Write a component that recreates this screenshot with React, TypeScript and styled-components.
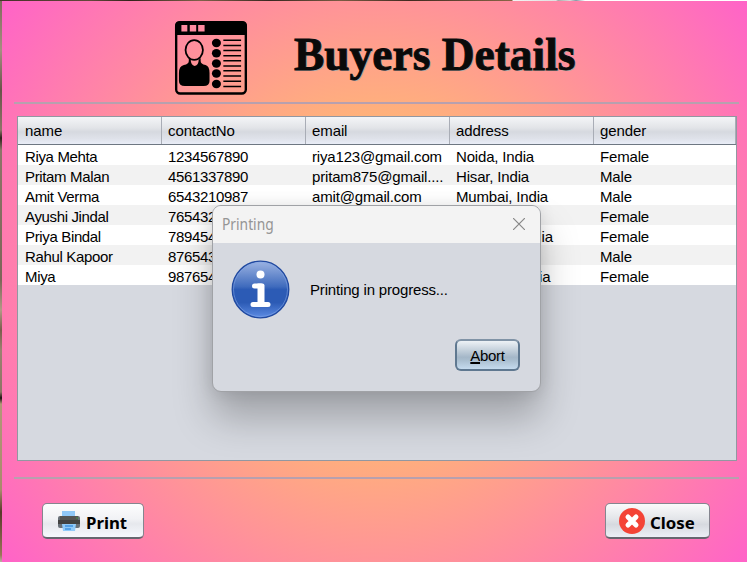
import React from "react";
import styled, { createGlobalStyle } from "styled-components";

const GlobalStyle = createGlobalStyle`
  * { box-sizing: border-box; }
  body { margin: 0; overflow: hidden; }
`;

const Desktop = styled.div`
  width: 747px;
  height: 562px;
  padding: 1px 0 0 2px;
  overflow: hidden;
  background:
    linear-gradient(90deg, #48302a 0, #63483b 90px, #33221b 130px, #81614a 200px, #3a2720 270px, #7b5b43 340px, #41291f 410px, #8a6546 512px, #f4f4f4 513px, #e0e0e0 556px, #a9a9a9 558px, #dcdcdc 570px, #8798a5 576px, #fff 585px) 0 0 / 100% 1px no-repeat,
    linear-gradient(180deg, #806a5c 0, #a58e80 50px, #69544a 90px, #8d7568 130px, #2f211c 138px, #8d7568 150px, #7c6658 280px, #b39a86 310px, #7a5d4d 330px, #9b8270 350px, #8d7565 392px, #1c1210 398px, #b29878 404px, #a98a6c 490px, #59392b 512px, #9a7658 555px, #bcb0a6 562px);
`;

const Window = styled.main`
  position: relative;
  width: 745px;
  height: 561px;
  padding: 0 10px 0 12px;
  display: flex;
  flex-direction: column;
  background: radial-gradient(circle 466px at 373px 280px, #ffdc50 0%, #ff63c8 100%);
  font-family: "Liberation Sans", Arial, sans-serif;
  font-size: 15px;
  color: #000;
`;

const Header = styled.header`
  height: 101px;
  display: flex;
  align-items: flex-start;
  padding: 19px 0 0 160px;
`;

const Title = styled.h1`
  margin: 8px 0 0 46px;
  font: bold 46px/54px "Liberation Serif", serif;
  color: #0a0a0a;
  white-space: nowrap;
  -webkit-text-stroke: 0.9px #0a0a0a;
  text-shadow: 1px 1px 0 #b3a8a6;
  transform: scaleX(0.988);
  transform-origin: left;
`;

const Divider = styled.div`
  height: 2px;
  width: 725px;
  flex: none;
  background: #b8a0ae;
`;

const TablePane = styled.section`
  width: 720px;
  height: 345px;
  margin: 12px 0 16px 3px;
  flex: none;
  border: 1px solid #9297a1;
  background: #d6d9e0;
`;

const Row = styled.div<{ $odd?: boolean }>`
  height: 20px;
  display: grid;
  grid-template-columns: 143px 144px 144px 144px 143px;
  align-items: center;
  background: ${(p) => (p.$odd ? "#f2f2f2" : "#fff")};
`;

const HeadRow = styled(Row)`
  height: 28px;
  grid-template-columns: 144px 144px 144px 144px 142px;
  align-items: stretch;
  border-bottom: 1px solid #6e7782;
  background: linear-gradient(#f4f5f7 0, #e2e4e8 40%, #d6d9df 55%, #dfe2ea 80%, #e9edf7 100%);
`;

const Cell = styled.span<{ $numeric?: boolean }>`
  padding: 2px 0 0 7px;
  line-height: 20px;
  letter-spacing: ${(p) => (p.$numeric ? "-0.34px" : "-0.17px")};
  white-space: nowrap;

  &:first-child { letter-spacing: -0.35px; }
`;

const HeadCell = styled.span`
  padding-left: 6px;
  line-height: 27px;
  letter-spacing: -0.1px;
  border-right: 1px solid #a9adb6;

  &:first-child { padding-left: 7px; }
`;

const Footer = styled.footer`
  display: flex;
  justify-content: space-between;
  padding: 24px 26px 0 28px;
`;

const ToolButton = styled.button<{ $wide?: boolean }>`
  width: ${(p) => (p.$wide ? "105px" : "102px")};
  height: 36px;
  padding: 0 0 0 ${(p) => (p.$wide ? "12px" : "14px")};
  display: flex;
  align-items: center;
  gap: ${(p) => (p.$wide ? "4px" : "5px")};
  margin-right: ${(p) => (p.$wide ? "1px" : "0")};
  border: 1px solid #85858f;
  border-bottom: 2px solid #66666f;
  border-radius: 5px;
  background: ${(p) =>
    p.$wide
      ? "linear-gradient(#fafafb 0, #e3e5e9 45%, #d6d9df 62%, #eceff6 100%)"
      : "linear-gradient(#fdfdfe 0, #f1f2f5 45%, #e6e8ed 60%, #f6f8fd 100%)"};
  font: bold 16.8px/22px "Noto Sans", sans-serif;
  color: #000;
  span { padding-top: 4px; }
`;

const Dialog = styled.div`
  position: absolute;
  left: 210px;
  top: 204px;
  width: 329px;
  height: 187px;
  border: 1px solid #a0a2a6;
  border-radius: 9px;
  overflow: hidden;
  background: #d6d9e0;
  box-shadow: 0 26px 38px rgba(0, 0, 0, 0.25), 0 1px 16px rgba(0, 0, 0, 0.1);
`;

const TitleBar = styled.div`
  height: 37px;
  display: flex;
  align-items: center;
  justify-content: space-between;
  padding: 0 15px 2px 9px;
  background: #f3f3f3;
  font: 15.5px/34px "Noto Sans", sans-serif;
  color: #959595;
`;

const TitleText = styled.span`
  display: block;
  transform: scaleX(0.89);
  transform-origin: left;
`;

const DialogBody = styled.div`
  display: flex;
  align-items: center;
  padding: 17px 0 0 18px;
  gap: 19px;
`;

const Message = styled.span`
  letter-spacing: -0.17px;
  padding-bottom: 2px;
`;

const DialogActions = styled.div`
  display: flex;
  justify-content: flex-end;
  padding: 19px 20px 0 0;
`;

const AbortButton = styled.button`
  width: 65px;
  height: 32px;
  padding: 0;
  border: 2px solid #5f7890;
  border-top-color: #8093a6;
  border-radius: 6px;
  background: linear-gradient(#edf2f6 0, #c5d1dc 32%, #a4b7c8 58%, #a8bccd 66%, #c5dbee 100%);
  font: 15px "Liberation Sans", Arial, sans-serif;
  letter-spacing: -0.3px;
  color: #000;
  u { text-decoration-thickness: 2px; text-underline-offset: 1px; }
`;

const columns = ["name", "contactNo", "email", "address", "gender"];
const buyers = [
  ["Riya Mehta", "1234567890", "riya123@gmail.com", "Noida, India", "Female"],
  ["Pritam Malan", "4561337890", "pritam875@gmail....", "Hisar, India", "Male"],
  ["Amit Verma", "6543210987", "amit@gmail.com", "Mumbai, India", "Male"],
  ["Ayushi Jindal", "7654321098", "", "", "Female"],
  ["Priya Bindal", "7894543210", "", "Gurgaon, India", "Female"],
  ["Rahul Kapoor", "8765432109", "", "", "Male"],
  ["Miya", "9876543210", "", "Chennai, India", "Female"],
];

const DetailsIcon = () => (
  <svg width="74" height="76" viewBox="0 0 75 76" preserveAspectRatio="none">
    <rect x="2.200" y="2.500" width="70.600" height="71" rx="4" fill="none" stroke="#000" strokeWidth="2.400" />
    <path d="M1 6Q1 1 6 1H69Q74 1 74 6V15H1Z" />
    <g fill="#ff8ba0">
      <rect x="7.500" y="5" width="6" height="6.500" />
      <rect x="16" y="5" width="6.500" height="6.500" />
      <rect x="24.500" y="5" width="6.500" height="6.500" />
    </g>
    <ellipse cx="20.500" cy="30" rx="8.800" ry="9.900" fill="none" stroke="#000" strokeWidth="1.800" />
    <path d="M15 38V41Q15 44 10 45Q5 46 5 53V61Q5 66 11 66H30Q36 66 36 61V53Q36 46 32 45Q27 44 27 41V38L25 40Q25 45 21 46Q17 45 17 40Z" />
    {[23, 33.2, 43.5, 53.5, 64].map((y) => (
      <g key={y}>
        <ellipse cx="43" cy={y} rx="4.600" ry="4.200" />
        <path d={`M50 ${y - 2.700}H68M50 ${y + 2.500}H68`} stroke="#000" strokeWidth="1.500" />
      </g>
    ))}
  </svg>
);

const PrinterIcon = () => (
  <svg width="24" height="22" viewBox="0 0 24 22">
    <path d="M5 1H18V7H5Z" fill="#90c8f8" />
    <rect x="1" y="6" width="22" height="12" rx="2" fill="#687078" />
    <path d="M3 6H21V10H3Z" fill="#555" />
    <path d="M1 10H23V14H1Z" fill="#424242" />
    <circle cx="20" cy="8" r=".8" fill="#43a047" />
    <path d="M5 14H19L18 21H6Z" fill="#90caf9" />
    <path d="M8 16H16M8 19H14" stroke="#1976d2" strokeWidth="1" />
  </svg>
);

const CloseIcon = () => (
  <svg width="28" height="28" viewBox="0 0 28 28">
    <circle cx="14" cy="14" r="13" fill="#f44336" />
    <path d="M10 10L18 18M18 10L10 18" stroke="#fff" strokeWidth="5" strokeLinecap="round" />
  </svg>
);

const InfoIcon = () => (
  <svg width="60" height="60" viewBox="0 0 60 60">
    <defs>
      <linearGradient id="infoFill" x2="0" y2="1">
        <stop offset="0" stopColor="#9db4e2" />
        <stop offset=".45" stopColor="#3f6bbd" />
        <stop offset=".5" stopColor="#2c5bb5" />
        <stop offset=".73" stopColor="#2c5bb5" />
        <stop offset="1" stopColor="#5d8ce4" />
      </linearGradient>
    </defs>
    <circle cx="29.500" cy="29.500" r="28.300" fill="url(#infoFill)" stroke="#2049a0" strokeWidth="1.300" />
    <circle cx="29.500" cy="29.500" r="27" fill="none" stroke="#83a6e6" strokeOpacity=".55" />
    <circle cx="29.500" cy="14.500" r="4" fill="#fff" />
    <path d="M23.500 26H30V44.500M22 44.500H37" fill="none" stroke="#fff" strokeWidth="5" strokeLinecap="round" strokeLinejoin="round" />
    <path d="M26.500 23.500H31.500Q33.500 23.500 33.500 25.500V45H26.500Z" fill="#fff" />
  </svg>
);

export default function App() {
  return (
    <Desktop>
      <GlobalStyle />
      <Window>
        <Header>
          <DetailsIcon />
          <Title>Buyers Details</Title>
        </Header>
        <Divider />
        <TablePane>
          <HeadRow>
            {columns.map((c) => <HeadCell key={c}>{c}</HeadCell>)}
          </HeadRow>
          {buyers.map((buyer, i) => (
            <Row key={buyer[0]} $odd={i % 2 === 1}>
              {buyer.map((value, j) => <Cell key={j} $numeric={j === 1}>{value}</Cell>)}
            </Row>
          ))}
        </TablePane>
        <Divider />
        <Footer>
          <ToolButton><PrinterIcon /><span>Print</span></ToolButton>
          <ToolButton $wide><CloseIcon /><span>Close</span></ToolButton>
        </Footer>
        <Dialog role="dialog" aria-label="Printing">
          <TitleBar>
            <TitleText>Printing</TitleText>
            <svg width="12" height="12" viewBox="0 0 12 12">
              <path d="M0 0L12 12M12 0L0 12" stroke="#888" strokeWidth="1.200" />
            </svg>
          </TitleBar>
          <DialogBody>
            <InfoIcon />
            <Message>Printing in progress...</Message>
          </DialogBody>
          <DialogActions>
            <AbortButton><u>A</u>bort</AbortButton>
          </DialogActions>
        </Dialog>
      </Window>
    </Desktop>
  );
}
